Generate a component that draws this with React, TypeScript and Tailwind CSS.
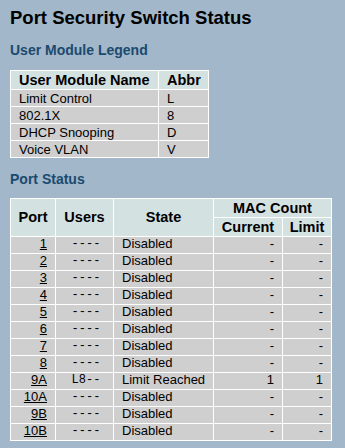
import React from "react";

type PortRow = {
  port: string;
  users: string;
  state: string;
  current: string;
  limit: string;
};

const legend = [
  { name: "Limit Control", abbr: "L" },
  { name: "802.1X", abbr: "8" },
  { name: "DHCP Snooping", abbr: "D" },
  { name: "Voice VLAN", abbr: "V" },
];

const ports: PortRow[] = [
  ...["1", "2", "3", "4", "5", "6", "7", "8"].map((p) => ({
    port: p,
    users: "----",
    state: "Disabled",
    current: "-",
    limit: "-",
  })),
  { port: "9A", users: "L8--", state: "Limit Reached", current: "1", limit: "1" },
  { port: "10A", users: "----", state: "Disabled", current: "-", limit: "-" },
  { port: "9B", users: "----", state: "Disabled", current: "-", limit: "-" },
  { port: "10B", users: "----", state: "Disabled", current: "-", limit: "-" },
];

const hdr = "bg-[#d4e1e1] font-bold text-[14.5px] text-black text-center align-middle p-0 leading-[17px]";
const cell = "bg-[#cfcfcf] text-black align-middle h-[16px] p-0 leading-[15px]";
const row = "bg-[#cfcfcf] text-black align-middle h-[15.8px] p-0 pb-[2px] leading-[14px]";

export default function App() {
  return (
    <div className="min-h-[448px] w-[345px] bg-[#a2b7c9] pl-[10px] pt-[7px] font-['Liberation_Sans',Arial,sans-serif] text-[13px]">
      <h1 className="text-[18.5px] font-bold leading-[22px] text-black">Port Security Switch Status</h1>

      {/* legend */}
      <h2 className="mt-[13px] text-[14px] font-bold leading-[17px] text-[#1b4a6f]">User Module Legend</h2>
      <table className="mt-[11px] w-[199px] border-separate border-spacing-[1px] bg-white">
        <thead>
          <tr>
            <th className={`${hdr} h-[18px] pl-2 text-left`}>User Module Name</th>
            <th className={`${hdr} w-[49px] pl-2 text-left`}>Abbr</th>
          </tr>
        </thead>
        <tbody>
          {legend.map((l) => (
            <tr key={l.abbr}>
              <td className={`${cell} pl-2`}>{l.name}</td>
              <td className={`${cell} pl-2`}>{l.abbr}</td>
            </tr>
          ))}
        </tbody>
      </table>

      {/* ports */}
      <h2 className="mt-[13px] text-[14px] font-bold leading-[17px] text-[#1b4a6f]">Port Status</h2>
      <table className="mt-[10px] w-[322px] border-separate border-spacing-[1px] bg-white">
        <thead>
          <tr>
            <th rowSpan={2} className={`${hdr} w-[44px]`}>Port</th>
            <th rowSpan={2} className={`${hdr} w-[57px]`}>Users</th>
            <th rowSpan={2} className={`${hdr} w-[99px]`}>State</th>
            <th colSpan={2} className={`${hdr} h-[18px]`}>MAC Count</th>
          </tr>
          <tr>
            <th className={`${hdr} h-[18px] w-[68px]`}>Current</th>
            <th className={hdr}>Limit</th>
          </tr>
        </thead>
        <tbody>
          {ports.map((r) => (
            <tr key={r.port}>
              <td className={`${row} pr-2 text-right`}>
                <a href="#" className="text-black underline">{r.port}</a>
              </td>
              <td className={`${row} pl-[3px] text-center font-['Liberation_Mono',monospace] text-[12px]`}>{r.users}</td>
              <td className={`${row} pl-2`}>{r.state}</td>
              <td className={`${row} pr-2 text-right`}>{r.current}</td>
              <td className={`${row} pr-2 text-right`}>{r.limit}</td>
            </tr>
          ))}
        </tbody>
      </table>
    </div>
  );
}
